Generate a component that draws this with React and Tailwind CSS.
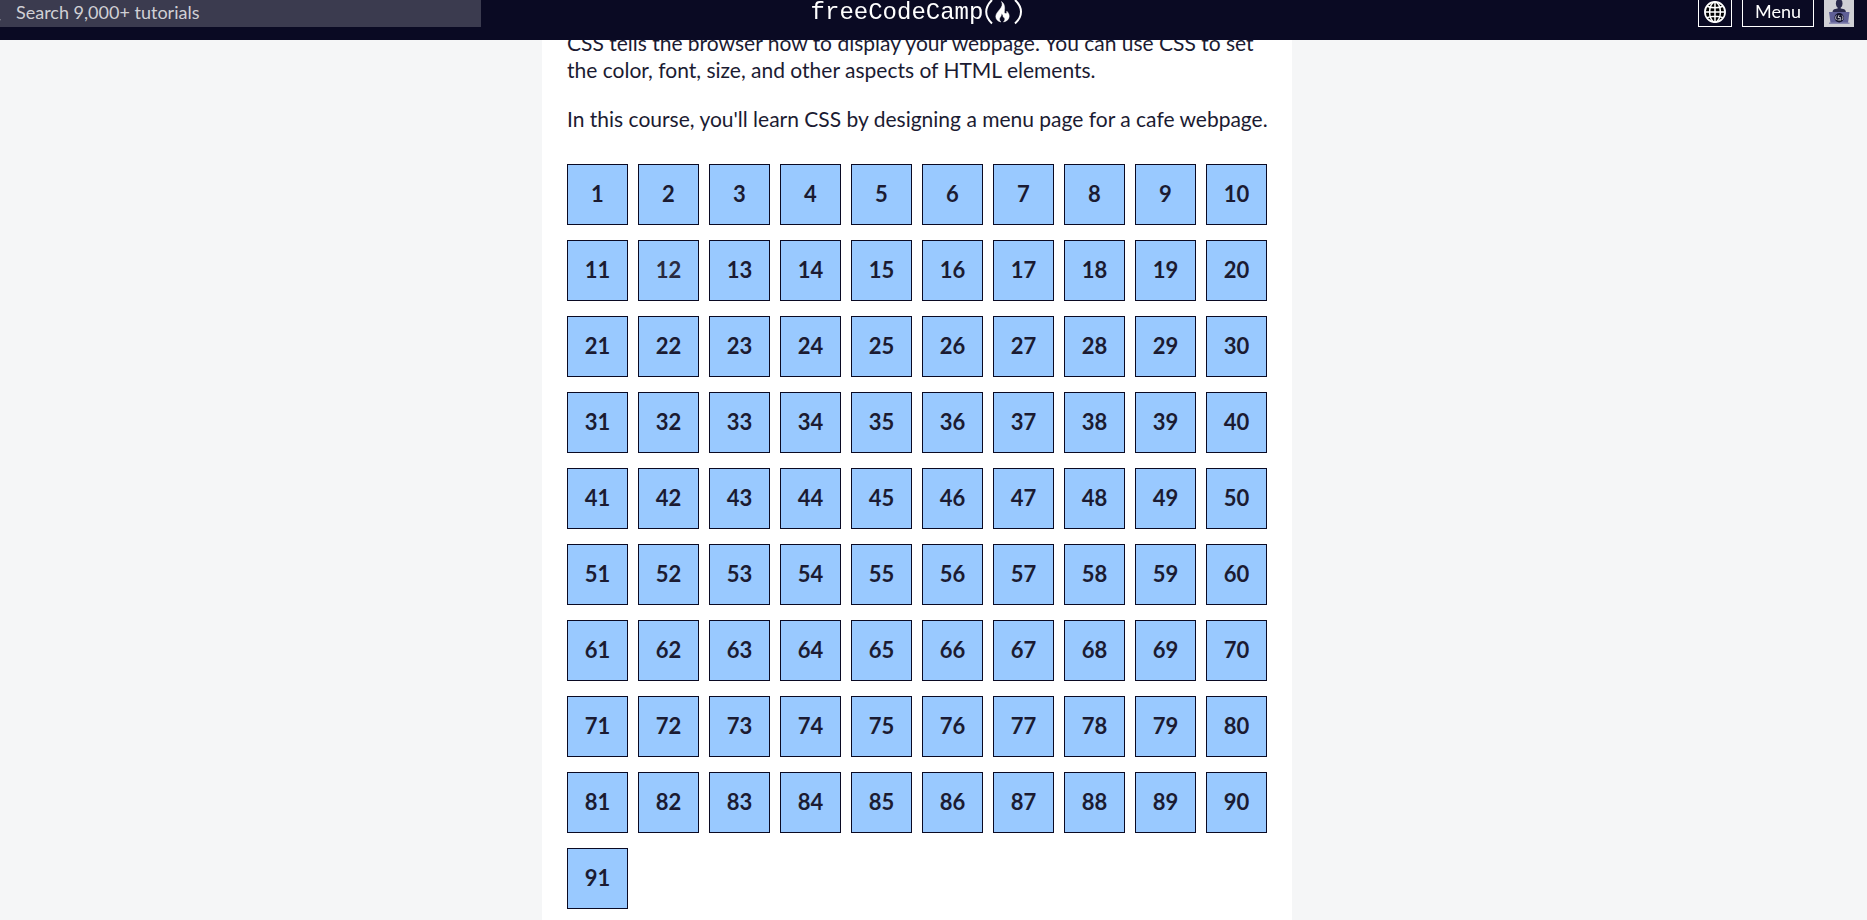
import React from 'react';
import { Search } from 'lucide-react';

const STEPS = Array.from({ length: 91 }, (_, i) => i + 1);
const ACTIVE_STEP = 12;

function GlobeIcon() {
  return (
    <svg width="22" height="22" viewBox="0 0 22 22" fill="none" stroke="#fff" strokeWidth="1.5" aria-hidden="true">
      <circle cx="11" cy="11" r="10.1" fill="#000" strokeWidth="1.7" />
      <ellipse cx="11" cy="11" rx="5.4" ry="10.1" />
      <path d="M11 1v20M1 11h20M3 5.2c2.200 1 5 1.500 8 1.500s5.800-.5 8-1.500M3 16.800c2.200-1 5-1.500 8-1.500s5.800.5 8 1.500" />
    </svg>
  );
}

function FlameIcon() {
  return (
    <svg width="40" height="26" viewBox="0 0 40 26" fill="none" aria-hidden="true">
      <path d="M9 0C5 4 3.200 7.500 3.200 11.800S5 19.800 9 23.500" stroke="#fff" strokeWidth="2" />
      <path d="M32 0c4.300 4 6 7.500 6 11.800s-1.700 8-6 11.700" stroke="#fff" strokeWidth="2" />
      <path
        d="M18.500 1.500c1.400 3 .6 5-1.600 7.700-2.200 2.700-4.100 4.900-4.100 7.200 0 2.800 1.800 4.700 5 5.600-1.400-1.400-1.700-2.900-.8-4.400.9-1.300 1.500-2.500 1.500-4.200 1.400.9 1.600 2.200 1.700 3.600 1.600.6 2.600 2.300.3 5 3.600-.8 5.700-3 5.700-5.800 0-2-.9-3.500-2.400-5 .2 1.500-.3 2.300-1.200 2.400-1.200.1-1.500-.8-1.200-2.500.6-4.500.1-7.300-2.900-9.600z"
        fill="#fff"
        stroke="#fff"
        strokeWidth="0.500"
      />
    </svg>
  );
}

function Avatar() {
  return (
    <svg width="30" height="27" viewBox="0 0 30 27" aria-hidden="true">
      <path d="M0 0h30v27H0z" fill="#d0d0d5" />
      <ellipse cx="15.200" cy="3.400" rx="3.300" ry="4.200" fill="#2a2a4c" />
      <path d="M13.700 6h3v3h-3z" fill="#2a2a4c" />
      <path d="M8.500 12c0-2.500 2.500-3.600 6.700-3.600s6.700 1.100 6.700 3.600z" fill="#2a2a4c" />
      <path d="M5 12h20.500L24 23H6.500z" fill="#5f5f96" />
      <path d="M5 22.500h20.500V24H5z" fill="#8c8cb4" />
      <circle cx="15.200" cy="17.700" r="4.700" fill="#14142e" />
      <path d="M12.500 15.500c-1.200 1.500-1.200 3 0 4.500M18 15.500c1.200 1.500 1.200 3 0 4.500M15.200 15l-1.200 2.500 2.500 0-.5 2.500M13.500 20h3.500" stroke="#d0d0d5" strokeWidth="0.900" fill="none" />
    </svg>
  );
}

function Header() {
  return (
    <header className="fixed top-0 -left-[33px] right-0 z-10 grid h-10 grid-cols-[1fr_auto_1fr] items-start bg-[#0a0a23] px-[13px]">
      <form role="search" className="flex h-[27px] w-[501px] items-center bg-[#3b3b4f] pb-[2px] pl-1 text-[#d0d0d5]">
        <Search size={18} strokeWidth={2} className="shrink-0" aria-hidden="true" />
        <input
          type="text"
          aria-label="Search"
          placeholder="Search 9,000+ tutorials"
          className="min-w-0 flex-1 bg-transparent pl-[14px] text-[18px] leading-[23px] outline-none placeholder:text-[#d0d0d5]"
        />
      </form>
      <a href="#" className="flex h-[26px] items-center text-white">
        <span className="font-['Liberation_Mono',monospace] text-[24px] leading-[22px]">freeCodeCamp</span>
        <FlameIcon />
      </a>
      <nav className="flex items-start justify-end gap-[10px]">
        <button type="button" aria-label="Change language" className="flex h-[27px] w-[34px] items-start justify-center border border-t-0 border-white pt-px">
          <GlobeIcon />
        </button>
        <button type="button" className="h-[27px] w-[72px] border border-t-0 border-white pb-1 text-[18px] leading-[22px] text-white">
          Menu
        </button>
        <a href="#" aria-label="Profile">
          <Avatar />
        </a>
      </nav>
    </header>
  );
}

export default function App() {
  return (
    <div className="min-h-screen overflow-x-hidden bg-[#f5f6f7] font-[Lato,sans-serif] text-[#1b1b32]">
      <Header />
      <div className="pr-[33px]">
        <main className="mx-auto min-h-screen max-w-[750px] bg-white px-[25px] pt-[29px]">
          <div className="-mr-[10px] space-y-[22px] text-[21px] leading-[27px]">
            <p>
              CSS tells the browser how to display your webpage. You can use CSS to set the color, font, size, and other
              aspects of HTML elements.
            </p>
            <p>In this course, you'll learn CSS by designing a menu page for a cafe webpage.</p>
          </div>
          <nav aria-label="Steps" className="mt-8 grid grid-cols-10 gap-x-[10px] gap-y-[15px]">
            {STEPS.map((n) => (
              <a
                key={n}
                href={`#step-${n}`}
                className={`flex aspect-square items-center justify-center border border-[#0a0a23] bg-[#99c9ff] pb-[2px] text-[22px] leading-[27px] font-bold ${
                  n === ACTIVE_STEP ? 'text-[#2a2a40]' : 'text-[#1b1b32]'
                }`}
              >
                {n}
              </a>
            ))}
          </nav>
        </main>
      </div>
    </div>
  );
}
